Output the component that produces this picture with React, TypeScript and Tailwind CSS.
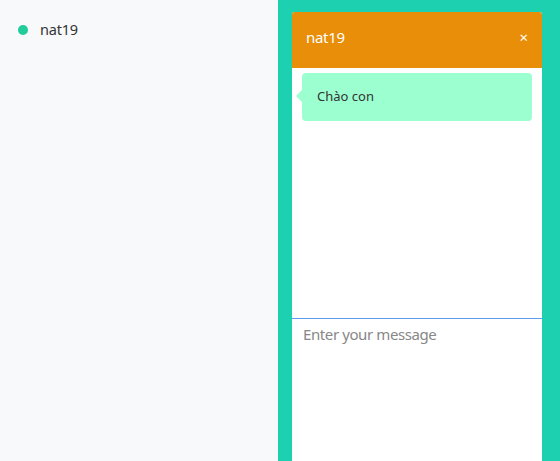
export default function App() {
  return (
    <div className="flex h-[461px] w-[560px] overflow-hidden font-['Noto_Sans',sans-serif]">
      <aside className="w-[278px] shrink-0 bg-[#f7f9fb] px-[18px] py-[19px]">
        <div className="flex items-center gap-[12px]">
          <span className="h-[10px] w-[10px] rounded-full bg-[#20cc99]" />
          <span className="text-[14.5px] tracking-[-0.2px] text-[#333]">nat19</span>
        </div>
      </aside>
      <main className="flex-1 bg-[#1dd1b0] pl-[14px] pr-[18px] pt-[12px]">
        <div className="flex h-[480px] flex-col rounded-t-[3px] bg-white">
          <header className="flex h-[56px] shrink-0 items-center justify-between rounded-t-[3px] bg-[#e88e08] pb-[6px] pl-[14px] pr-[14px] text-white">
            <span className="text-[15px] tracking-[-0.3px]">nat19</span>
            <button className="text-[15px] leading-none">×</button>
          </header>
          <div className="h-[250px] shrink-0 px-[10px] pt-[5px]">
            <div className="relative flex h-[48px] items-center rounded-[4px] bg-[#9cffd0] pl-[15px] text-[13px] text-[#333]">
              <span className="absolute left-[-6px] top-[17px] h-0 w-0 border-y-[6px] border-r-[6px] border-y-transparent border-r-[#9cffd0]" />
              Chào con
            </div>
          </div>
          <textarea
            autoFocus
            placeholder="Enter your message"
            className="flex-1 resize-none border-t border-[#5b9cf0] px-[11px] py-[4px] text-[15px] tracking-[-0.4px] text-[#333] outline-none placeholder:text-[#888]"
          />
        </div>
      </main>
    </div>
  );
}
